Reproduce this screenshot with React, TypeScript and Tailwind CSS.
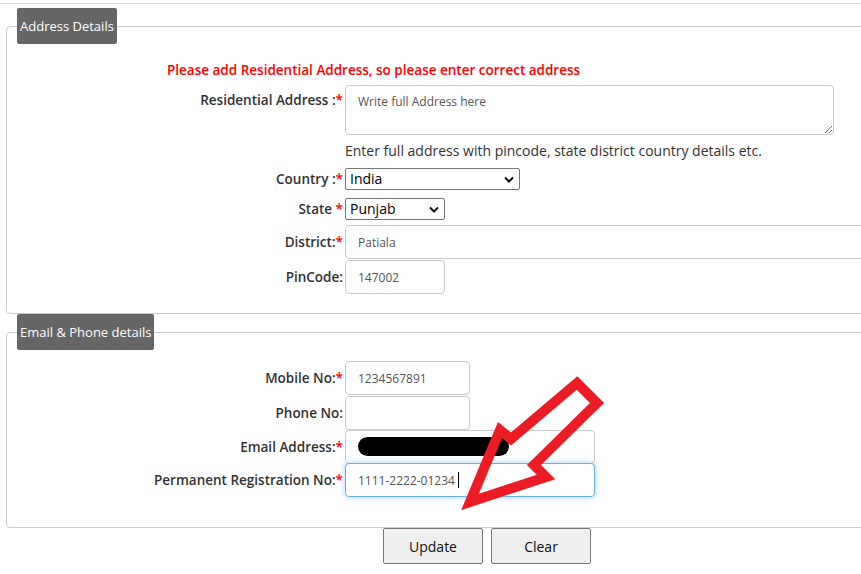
import React from 'react';

type RowProps = {
  label: string;
  required?: boolean;
  top?: boolean;
  className?: string;
  children: React.ReactNode;
};

const Row = ({ label, required, top, className = '', children }: RowProps) => {
  return (
    <div className={`flex ${top ? 'items-start' : 'items-center'} ${className}`}>
      <label
        className={`w-[326px] shrink-0 text-right text-[13.5px] leading-[20px] font-semibold text-[#333] mr-[2px] ${top ? 'pt-[5px]' : ''}`}
      >
        {label}
        {required && <span className="text-[#f00]">*</span>}
      </label>
      {children}
    </div>
  );
};

const Chevron = () => (
  <svg width="10" height="7" viewBox="0 0 10 7" className="pointer-events-none absolute right-[6px] top-[8px]">
    <path d="M1 1.5 L5 5.5 L9 1.5" fill="none" stroke="#111" strokeWidth="2" />
  </svg>
);

const Select = ({ value, width }: { value: string; width: string }) => (
  <div className={`relative ${width}`}>
    <select
      defaultValue={value}
      className="block h-[22px] w-full appearance-none rounded-[2px] border border-[#767676] bg-white pl-[4px] text-[14px] leading-[20px] text-black"
    >
      <option>{value}</option>
    </select>
    <Chevron />
  </div>
);

const inputCls =
  'block h-[34px] rounded-[4px] border border-[#ccc] bg-white px-[12px] text-[12px] text-[#555] outline-none';

const Legend = ({ children }: { children: React.ReactNode }) => (
  <legend className="h-[36px] rounded-[2px] bg-[#666] px-[3px] text-[13px] leading-[36px] text-white">
    {children}
  </legend>
);

const Arrow = () => (
  <svg className="pointer-events-none absolute inset-0" width="861" height="574" viewBox="0 0 861 574">
    <polygon
      points="470,502 500,430 511,439 577,383 597,403 534,465 546,477"
      fill="none"
      stroke="#ed1c24"
      strokeWidth="10"
      strokeMiterlimit="10"
      strokeLinejoin="miter"
    />
  </svg>
);

const App = () => {
  return (
    <div
      className="relative min-h-screen w-full overflow-hidden bg-white text-[#333]"
      style={{ fontFamily: '"Open Sans", "Noto Sans", sans-serif' }}
    >
      <div className="h-[4px] border-b border-[#ddd]" />

      <fieldset className="ml-[6px] mt-[4px] w-[880px] rounded-[4px] border border-[#ccc] pl-[10px] pb-[19px]">
        <Legend>Address Details</Legend>
        <p className="mt-[16px] pl-[150px] text-[13.5px] font-semibold leading-[20px] text-[#f00]">
          Please add Residential Address, so please enter correct address
        </p>
        <Row label="Residential Address :" required top className="mt-[5px]">
          <textarea
            placeholder="Write full Address here"
            className="block h-[50px] w-[489px] rounded-[4px] border border-[#ccc] px-[12px] py-[7px] text-[12px] text-[#555] placeholder:text-[#555]"
          />
        </Row>
        <p className="ml-[328px] mt-[6px] text-[14px] leading-[20px] text-[#333]">
          Enter full address with pincode, state district country details etc.
        </p>
        <Row label="Country :" required className="mt-[7px]">
          <Select value="India" width="w-[175px]" />
        </Row>
        <Row label="State " required className="mt-[8px]">
          <Select value="Punjab" width="w-[100px]" />
        </Row>
        <Row label="District:" required className="mt-[5px]">
          <input readOnly defaultValue="Patiala" className={`${inputCls} w-[540px]`} />
        </Row>
        <Row label="PinCode:" className="mt-[1px]">
          <input readOnly defaultValue="147002" className={`${inputCls} w-[100px]`} />
        </Row>
      </fieldset>

      <fieldset className="ml-[6px] w-[880px] rounded-[4px] border border-[#ccc] pl-[10px] pb-[30px]">
        <Legend>Email &amp; Phone details</Legend>
        <Row label="Mobile No:" required className="mt-[11px]">
          <input readOnly defaultValue="1234567891" className={`${inputCls} w-[125px]`} />
        </Row>
        <Row label="Phone No:" className="mt-[1px]">
          <input readOnly defaultValue="" className={`${inputCls} w-[125px]`} />
        </Row>
        <Row label="Email Address:" required>
          <div className={`${inputCls} flex w-[250px] items-start pt-[6px]`}>
            <span className="h-[19px] w-[151px] rounded-full bg-black" />
          </div>
        </Row>
        <Row label="Permanent Registration No:" required className="-mt-px">
          <div className="relative">
            <input
              readOnly
              defaultValue="1111-2222-01234"
              className="block h-[34px] w-[250px] rounded-[4px] border border-[#66afe9] bg-white px-[12px] text-[12px] text-[#555] shadow-[0_0_6px_rgba(102,175,233,0.6)] outline-none"
            />
            <span className="absolute left-[113px] top-[9px] h-[16px] w-px bg-black" />
          </div>
        </Row>
      </fieldset>

      <div className="ml-[383px] flex gap-[8px]">
        <button className="h-[36px] w-[100px] rounded-[2px] border border-[#767676] bg-[#efefef] text-[14px] text-[#111]">
          Update
        </button>
        <button className="h-[36px] w-[100px] rounded-[2px] border border-[#767676] bg-[#efefef] text-[14px] text-[#111]">
          Clear
        </button>
      </div>

      <Arrow />
    </div>
  );
};

export default App;
